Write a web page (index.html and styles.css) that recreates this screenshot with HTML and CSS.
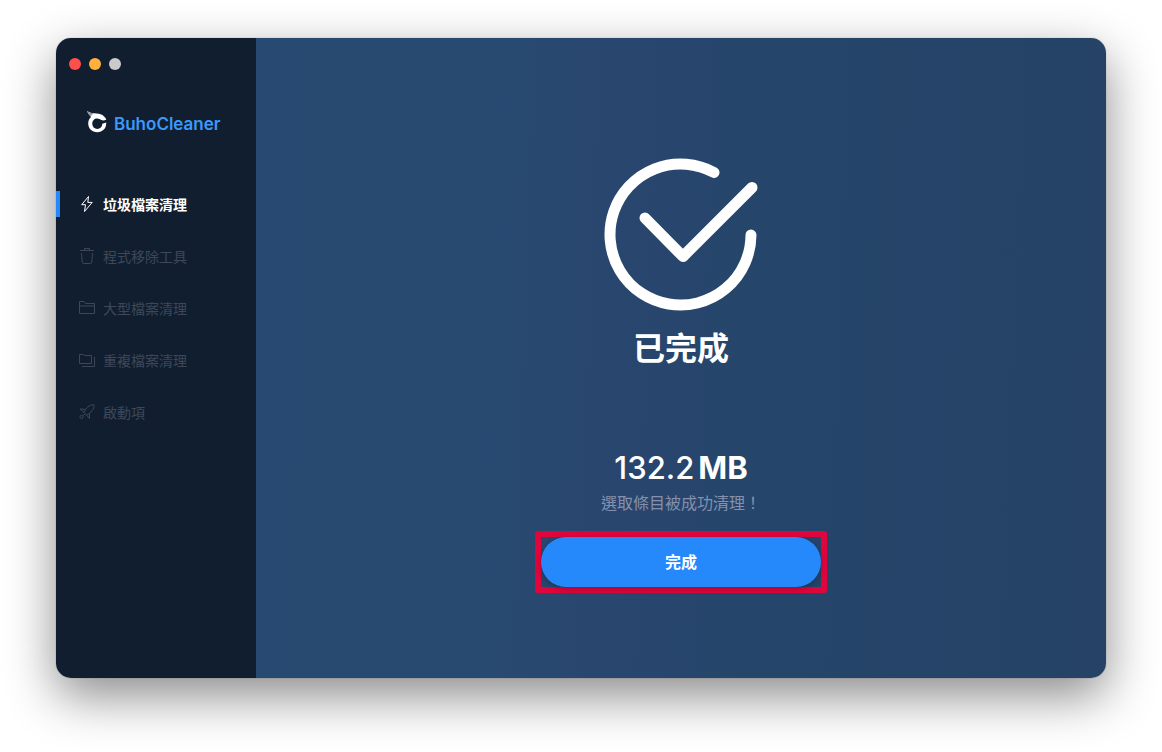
FILE: index.html
```html
<!DOCTYPE html>
<html lang="zh-Hant">
<head>
<meta charset="utf-8">
<meta name="viewport" content="width=device-width, initial-scale=1">
<title>BuhoCleaner</title>
<link rel="stylesheet" href="styles.css">
</head>
<body>
<div class="window">
  <aside class="sidebar">
    <div class="controls">
      <button class="control control-close" type="button" aria-label="關閉"></button>
      <button class="control control-minimize" type="button" aria-label="最小化"></button>
      <button class="control control-zoom" type="button" aria-label="縮放" disabled></button>
    </div>
    <div class="brand">
      <svg class="brand-logo" viewBox="0 0 22 24" aria-hidden="true">
        <path d="M1 1C4 3 7 3.200 11 3.500C15 3.800 18.500 5.500 20.300 9.500C18 11 15.500 10.500 13.500 9C10 7.200 6.300 9.500 6.300 13.500C6.300 16.800 8.600 18.900 11.300 18.900C14.200 18.900 16.200 17 16.300 13.800L20.200 12.600C20.600 18.500 16.600 22.200 11.300 22.200C6 22.200 2.200 18.500 2.200 13.500C2.200 10.500 3.500 8.300 5 7C3.800 5.600 2 3.500 1 1Z" fill="#fff"/>
        <path d="M1 1C3 2.600 5.500 3.200 7.500 3.300L4.600 6.300C3.500 5 2 3.500 1 1Z" fill="#8e969f"/>
      </svg>
      <span>BuhoCleaner</span>
    </div>
    <nav class="nav">
      <a class="nav-item active" href="#junk" aria-current="page">
        <svg class="nav-icon" viewBox="0 0 16 16" aria-hidden="true"><path d="M9.500 .5L2.700 8.700H6.500L5.500 15.500L13.200 6.400H8.800Z"/></svg>
        <span>垃圾檔案清理</span>
      </a>
      <a class="nav-item" href="#uninstall">
        <svg class="nav-icon" viewBox="0 0 16 16" aria-hidden="true"><path d="M1 2.500H15M5.500 2.500V.5H10.500V2.500M2.500 5L3.200 14Q3.300 15.500 4.700 15.500H11.300Q12.700 15.500 12.800 14L13.500 5"/></svg>
        <span>程式移除工具</span>
      </a>
      <a class="nav-item" href="#large">
        <svg class="nav-icon" viewBox="0 0 16 16" aria-hidden="true"><path d="M.5 13.500V1.500H5L6.500 3.500H15.500V13.500ZM.5 6H15.500"/></svg>
        <span>大型檔案清理</span>
      </a>
      <a class="nav-item" href="#duplicate">
        <svg class="nav-icon" viewBox="0 0 16 16" aria-hidden="true"><path d="M.5 11.500V2.500H4.500L6 3.500H12.500V11.500ZM15.500 5V14.500H3"/></svg>
        <span>重複檔案清理</span>
      </a>
      <a class="nav-item" href="#startup">
        <svg class="nav-icon" viewBox="0 0 16 16" aria-hidden="true"><path d="M5 8.500C7 4 10 .7 15 .8C15.300 5.500 12 8.500 7.700 11.200ZM7 5.500L1 5L5 8.500M10.500 9.500V14.500L7.700 11.200"/><circle cx="2.500" cy="13" r="1.600"/><path d="M3.700 11.800L6 9.800"/></svg>
        <span>啟動項</span>
      </a>
    </nav>
  </aside>
  <main class="content">
    <svg class="done-mark" viewBox="0 0 160 160" aria-hidden="true">
      <path d="M113 17.500A70.500 70.500 0 1 0 150 80"/>
      <path d="M44 63L82 101.500L151 32.500"/>
    </svg>
    <h1 class="title">已完成</h1>
    <p class="amount">132.2<span class="unit">MB</span></p>
    <p class="message">選取條目被成功清理！</p>
    <div class="highlight"><button class="done-button" type="button">完成</button></div>
  </main>
</div>
</body>
</html>
```
FILE: styles.css
```css
* {
  box-sizing: border-box;
}

body {
  display: flex;
  min-height: 100vh;
  margin: 0;
  padding: 38px 56px 74px;
  background: #fff;
  font-family: Inter, "Noto Sans CJK TC", sans-serif;
}

.window {
  display: flex;
  flex: 1;
  overflow: hidden;
  border-radius: 15px;
  box-shadow: 0 0 1px rgba(0, 0, 0, .5), 0 18px 50px rgba(0, 0, 0, .46);
}

.sidebar {
  flex: 0 0 200px;
  background: #111e2f;
}

.controls {
  display: flex;
  gap: 8px;
  padding: 20px 13px 0;
}

.control {
  width: 12px;
  height: 12px;
  padding: 0;
  border: 0;
  border-radius: 50%;
}

.control-close {
  background: #ff4f4d;
}

.control-minimize {
  background: #ffb13c;
}

.control-zoom {
  background: #cbcacb;
}

.brand {
  display: flex;
  align-items: center;
  gap: 6px;
  margin-top: 40px;
  padding-left: 30px;
  color: #3b99fc;
  font-size: 17px;
  font-weight: 600;
  line-height: 28px;
}

.brand-logo {
  width: 22px;
  height: 24px;
  margin-bottom: 4px;
}

.nav {
  display: flex;
  flex-direction: column;
  gap: 26px;
  margin-top: 53px;
}

.nav-item {
  display: flex;
  align-items: center;
  gap: 8px;
  height: 26px;
  padding-left: 19px;
  border-left: 4px solid transparent;
  color: #3c485a;
  font-size: 14px;
  line-height: 28px;
  text-decoration: none;
}

.nav-item span {
  padding-top: 2px;
}

.nav-item.active {
  border-color: #2589fb;
  color: #fff;
  font-weight: 700;
}

.nav-icon {
  width: 16px;
  height: 16px;
  fill: none;
  stroke: currentColor;
  stroke-width: 1;
  stroke-linejoin: round;
}

.content {
  display: flex;
  flex: 1;
  flex-direction: column;
  align-items: center;
  padding: 117px 24px 80px;
  background: linear-gradient(92deg, #284a72, #284a71 28%, #29466e 40%, #28466d 50%, #25456a 58%, #254469 70%, #264366);
  color: #fff;
}

.done-mark {
  width: 160px;
  height: 160px;
  fill: none;
  stroke: #fff;
  stroke-width: 11;
  stroke-linecap: round;
  stroke-linejoin: round;
}

.title {
  margin: 10px 0 0;
  font-size: 32px;
  font-weight: 700;
  line-height: 48px;
}

.amount {
  margin: 75px 0 0;
  font-size: 31px;
  font-weight: 500;
  line-height: 40px;
}

.unit {
  margin-left: 4px;
  font-weight: 700;
}

.message {
  margin: 3px 0 0;
  color: #8490ad;
  font-size: 16px;
  line-height: 24px;
}

.highlight {
  margin-top: 16px;
  border: 6px solid #e0053d;
  border-radius: 3px;
}

.done-button {
  display: block;
  width: 280px;
  height: 50px;
  padding: 0 0 3px;
  border: 0;
  border-radius: 25px;
  background: #2589fb;
  box-shadow: 0 2px 6px rgba(0, 0, 0, .25);
  color: #fff;
  font: inherit;
  font-size: 16px;
  font-weight: 700;
}
```
